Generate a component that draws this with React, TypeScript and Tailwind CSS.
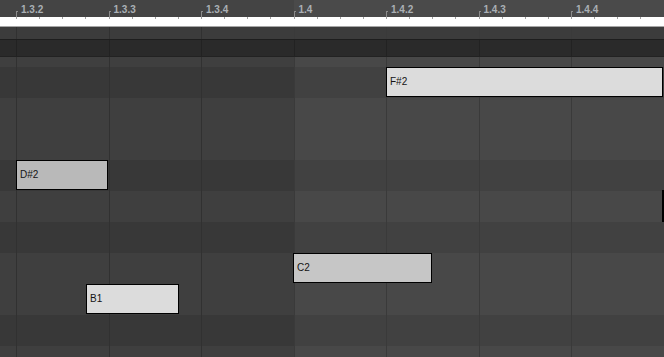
import React from "react";

type Row = { h: number; dark: boolean };

// piano rows from G2 (partly hidden) down to A1
const rows: Row[] = [
  { h: 10, dark: false },
  { h: 31, dark: true },
  { h: 31, dark: false },
  { h: 31, dark: false },
  { h: 31, dark: true },
  { h: 31, dark: false },
  { h: 31, dark: true },
  { h: 31, dark: false },
  { h: 31, dark: false },
  { h: 31, dark: true },
  { h: 11, dark: false },
];

const labels = ["1.3.2", "1.3.3", "1.3.4", "1.4", "1.4.2", "1.4.3", "1.4.4"];

const notes = [
  { name: "F#2", left: 386, top: 67, w: 277, fill: "bg-[#dcdcdc]" },
  { name: "D#2", left: 16, top: 160, w: 92, fill: "bg-[#b9b9b9]" },
  { name: "C2", left: 293, top: 253, w: 139, fill: "bg-[#c6c6c6]" },
  { name: "B1", left: 86, top: 284, w: 93, fill: "bg-[#dcdcdc]" },
];

function Column({
  label,
  right,
  first,
}: {
  label?: string;
  right: boolean;
  first?: boolean;
}) {
  const line = right ? "border-[#3a3a3a]" : "border-[#313131]";
  return (
    <div
      className={
        first
          ? "w-[16px] shrink-0 flex flex-col"
          : "w-[92.5px] shrink-0 flex flex-col"
      }
    >
      {/* ruler */}
      <div
        className={`h-[17px] flex items-end ${
          right ? "bg-[#4a4a4a]" : "bg-[#444444]"
        }`}
      >
        {label && (
          <div className="flex items-end h-full">
            <div className="w-[2px] h-[6px] border-l border-t border-[#8a8a8a]" />
            <span className="ml-[3px] mb-[2px] text-[10px] leading-[10px] font-semibold text-[#aab0b5]">
              {label}
            </span>
          </div>
        )}
      </div>
      {/* white loop strip with beat ticks */}
      <div className="h-[9px] bg-white flex">
        {!first &&
          [0, 1, 2, 3].map((i) => (
            <div key={i} className="flex-1">
              <div className="w-px h-[2px] bg-[#a0a0a0]" />
            </div>
          ))}
      </div>
      <div className="h-px bg-[#a6a6a6]" />
      <div className={`h-[12px] bg-[#3c3c3c] ${first ? "" : "border-l"} ${line}`} />
      <div className="h-px bg-[#1e1e1e]" />
      <div className={`h-[16px] bg-[#2a2a2a] ${first ? "" : "border-l"} border-[#222222]`} />
      <div className="h-px bg-[#222222]" />
      {/* grid */}
      {rows.map((r, i) => (
        <div
          key={i}
          style={{ height: r.h }}
          className={`${first ? "" : "border-l"} ${line} ${
            right
              ? r.dark
                ? "bg-[#414141]"
                : "bg-[#484848]"
              : r.dark
              ? "bg-[#383838]"
              : "bg-[#3f3f3f]"
          }`}
        />
      ))}
    </div>
  );
}

export default function App() {
  return (
    <div className="relative w-[664px] h-[357px] overflow-hidden bg-[#484848] font-['Liberation_Sans',Arial,sans-serif]">
      <div className="flex">
        <Column first right={false} />
        {labels.map((l, i) => (
          <Column key={l} label={l} right={i >= 3} />
        ))}
      </div>

      {/* notes */}
      {notes.map((n) => (
        <div
          key={n.name}
          style={{ left: n.left, top: n.top, width: n.w }}
          className={`absolute h-[30px] border border-black ${n.fill} flex items-center pl-[3px]`}
        >
          <span className="text-[10px] leading-none text-[#141414]">{n.name}</span>
        </div>
      ))}

      {/* scrollbar edge */}
      <div className="absolute left-[662px] top-[190px] w-[2px] h-[32px] bg-black" />
    </div>
  );
}
